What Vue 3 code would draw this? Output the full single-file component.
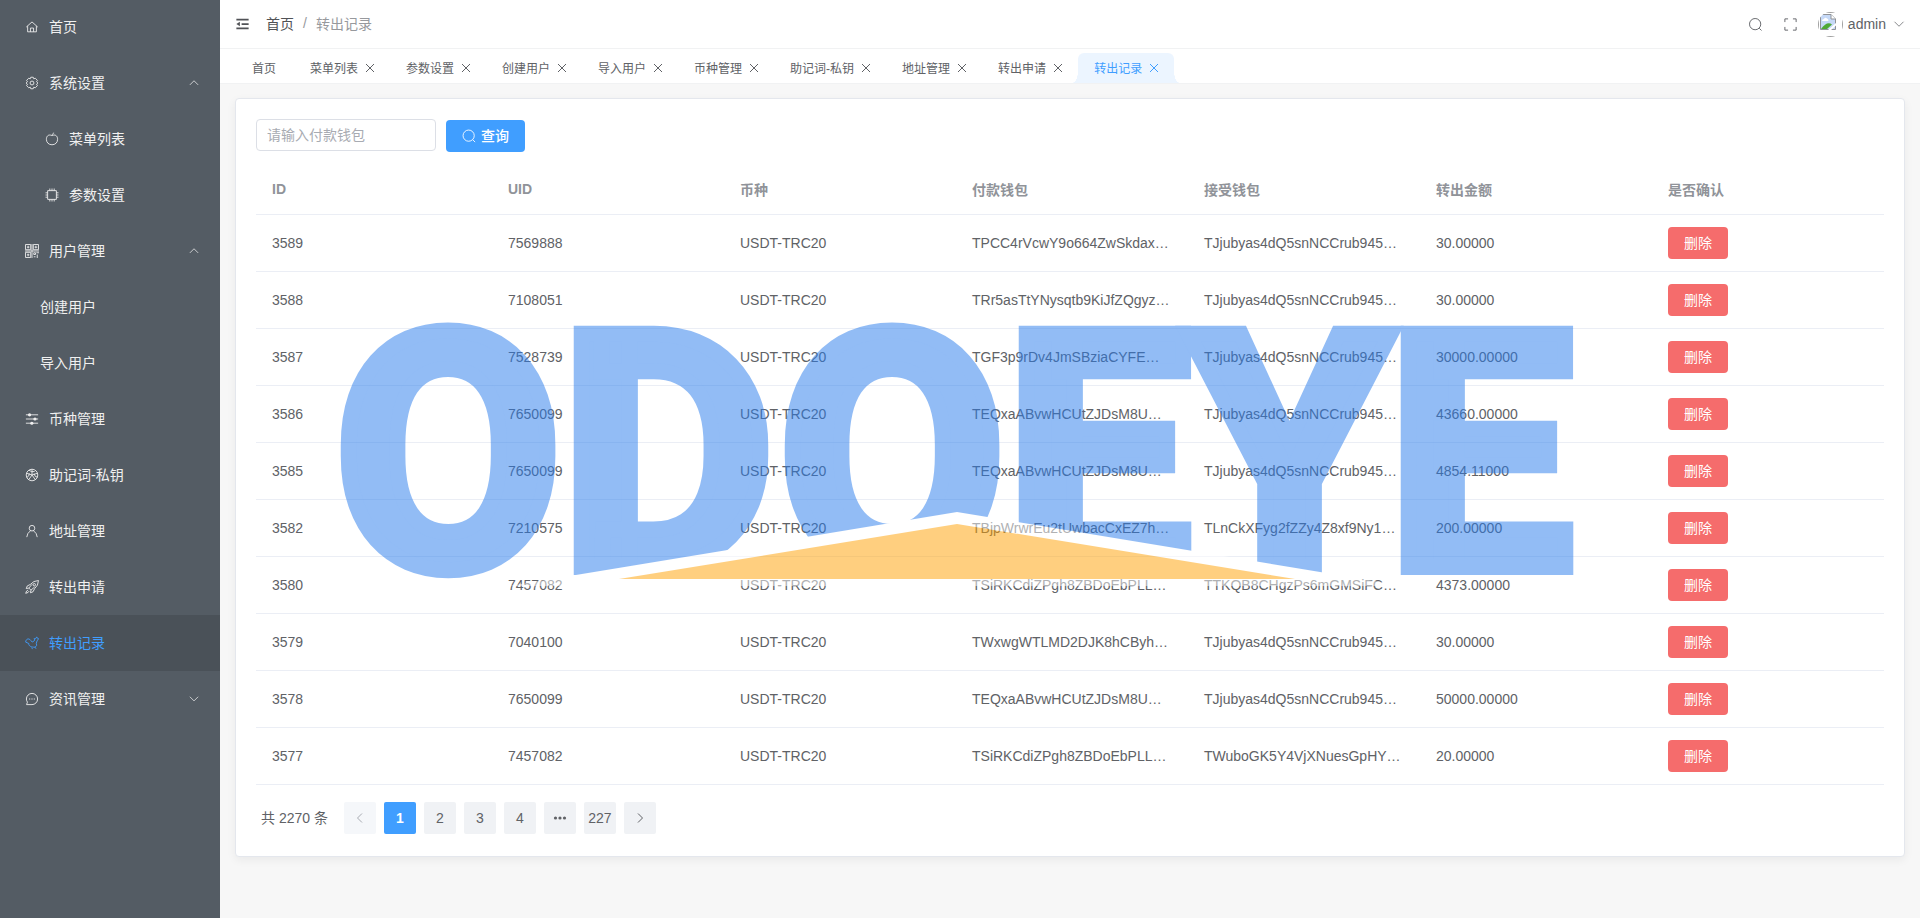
<script setup>
import { ref } from 'vue'

const menu = [
  { label: '首页', icon: 'home', level: 0 },
  { label: '系统设置', icon: 'setting', level: 0, arrow: 'up' },
  { label: '菜单列表', icon: 'apple', level: 1 },
  { label: '参数设置', icon: 'cpu', level: 1 },
  { label: '用户管理', icon: 'grid', level: 0, arrow: 'up' },
  { label: '创建用户', icon: '', level: 1 },
  { label: '导入用户', icon: '', level: 1 },
  { label: '币种管理', icon: 'operation', level: 0 },
  { label: '助记词-私钥', icon: 'ball', level: 0 },
  { label: '地址管理', icon: 'user', level: 0 },
  { label: '转出申请', icon: 'rocket', level: 0 },
  { label: '转出记录', icon: 'plane', level: 0, active: true },
  { label: '资讯管理', icon: 'chat', level: 0, arrow: 'down' },
]

const icons = {
  home: 'M1.5 8 8 2.2 14.5 8M3 7V13.5H13V7M6.2 13.5V9.2H9.8V13.5',
  setting:
    'M6.6 1.4H9.4L10 3.2 11.8 2.6 14.2 5 13.2 6.6 14.8 8 13.2 9.4 14.2 11 11.8 13.4 10 12.8 9.4 14.6H6.6L6 12.8 4.2 13.4 1.8 11 2.8 9.4 1.2 8 2.8 6.6 1.8 5 4.2 2.6 6 3.2ZM10.2 8A2.2 2.2 0 1 1 5.8 8A2.2 2.2 0 1 1 10.2 8Z',
  apple:
    'M9.4 3.6C8.6 4.2 7.4 4.2 6.4 3.6C3.6 2.9 1.6 5 1.6 8.4C1.6 12 4.2 14.6 8 14.6C11.8 14.6 14.4 12 14.4 8.4C14.4 5 12.4 2.9 9.4 3.6M8.2 4C8.2 2.4 9 1.4 10.4 1.2',
  cpu: 'M3 3H13V13H3ZM5.5 3V0.6M8 3V0.6M10.5 3V0.6M5.5 15.4V13M8 15.4V13M10.5 15.4V13M3 5.5H0.6M3 8H0.6M3 10.5H0.6M15.4 5.5H13M15.4 8H13M15.4 10.5H13',
  grid: 'M0.6 0.6H6.5V6.5H0.6ZM9.5 0.6H15.4V6.5H9.5ZM0.6 9.5H6.5V15.4H0.6ZM2.2 3.6H5M11 3.6H14M2.2 12.4H5M8 0V16M0 8H16M10 10H12V12H10ZM13 10H16M10 14.6H12M14 12V16M3.6 2V5M12.4 2V5M3.6 11V14',
  operation: 'M1 3.2H15M1 8H15M1 12.8H15M4 3.2H6.6M10 8H12.6M6.6 12.8H9.2',
  ball: 'M14.6 8A6.6 6.6 0 1 1 1.4 8A6.6 6.6 0 1 1 14.6 8ZM8 8 8 1.4M8 8 14.2 6M8 8 11.8 13.4M8 8 4.2 13.4M8 8 1.8 6M4.6 2.6Q7.5 5 11 4M14.2 10.6Q11 10.4 10.4 6.4M2 10.8Q5 9.8 5 6.2',
  user: 'M11.2 4.8A3.2 3.2 0 1 1 4.8 4.8A3.2 3.2 0 1 1 11.2 4.8ZM2 15Q2.4 10.4 6.4 7.6M14 15Q13.6 10.4 9.6 7.6',
  rocket:
    'M15.4 0.6Q9.5 0.8 6.2 5L2.6 6.8 1.4 9.8 4.4 9.2 6.8 11.6 6.2 14.6 9.2 13.4 11 9.8Q15.2 6.5 15.4 0.6ZM4.4 9.2 8 5M6.8 11.6 11 8M12 5.4A1.4 1.4 0 1 1 9.2 5.4A1.4 1.4 0 1 1 12 5.4ZM3.6 11.4Q1.4 12 0.8 15.2Q4.2 14.6 4.8 12.6',
  plane:
    'M0.8 7C0.8 3.4 4.4 2 6.4 5L8.2 6.8Q10.6 6.2 11.2 4.4L10.2 3.2 12.2 3 13.4 1 14.2 2.6 15.6 3 13.8 5.6Q12.2 8.6 13.4 10.6L11.6 12.8C7.4 13 3.8 11.4 4.4 8.6L0.8 7M7.6 13.2 8.6 15M11.6 12.8 12.6 14.6',
  chat: 'M1.8 14.4H8A6.4 6.4 0 1 0 1.6 8Q1.6 10 2.8 11.6ZM4.6 8H6M7.3 8H8.7M10 8H11.4',
}

const tabs = [
  '首页',
  '菜单列表',
  '参数设置',
  '创建用户',
  '导入用户',
  '币种管理',
  '助记词-私钥',
  '地址管理',
  '转出申请',
  '转出记录',
]
const activeTab = ref('转出记录')

const heads = ['ID', 'UID', '币种', '付款钱包', '接受钱包', '转出金额', '是否确认']
const rows = [
  ['3589', '7569888', 'USDT-TRC20', 'TPCC4rVcwY9o664ZwSkdax…', 'TJjubyas4dQ5snNCCrub945…', '30.00000'],
  ['3588', '7108051', 'USDT-TRC20', 'TRr5asTtYNysqtb9KiJfZQgyz…', 'TJjubyas4dQ5snNCCrub945…', '30.00000'],
  ['3587', '7528739', 'USDT-TRC20', 'TGF3p9rDv4JmSBziaCYFE…', 'TJjubyas4dQ5snNCCrub945…', '30000.00000'],
  ['3586', '7650099', 'USDT-TRC20', 'TEQxaABvwHCUtZJDsM8U…', 'TJjubyas4dQ5snNCCrub945…', '43660.00000'],
  ['3585', '7650099', 'USDT-TRC20', 'TEQxaABvwHCUtZJDsM8U…', 'TJjubyas4dQ5snNCCrub945…', '4854.11000'],
  ['3582', '7210575', 'USDT-TRC20', 'TBjpWrwrEu2tUwbacCxEZ7h…', 'TLnCkXFyg2fZZy4Z8xf9Ny1…', '200.00000'],
  ['3580', '7457082', 'USDT-TRC20', 'TSiRKCdiZPgh8ZBDoEbPLL…', 'TTKQB8CHgzPs6mGMSiFC…', '4373.00000'],
  ['3579', '7040100', 'USDT-TRC20', 'TWxwgWTLMD2DJK8hCByh…', 'TJjubyas4dQ5snNCCrub945…', '30.00000'],
  ['3578', '7650099', 'USDT-TRC20', 'TEQxaABvwHCUtZJDsM8U…', 'TJjubyas4dQ5snNCCrub945…', '50000.00000'],
  ['3577', '7457082', 'USDT-TRC20', 'TSiRKCdiZPgh8ZBDoEbPLL…', 'TWuboGK5Y4VjXNuesGpHY…', '20.00000'],
]
const wallet = ref('')
</script>

<template>
  <div class="layout">
    <nav class="sidebar" aria-label="主菜单">
      <a
        v-for="item in menu"
        :key="item.label"
        href="#"
        class="menu-item"
        :class="{ sub: item.level === 1, 'has-icon': item.icon, active: item.active }"
      >
        <svg v-if="item.icon" class="icon" viewBox="0 0 16 16" aria-hidden="true">
          <path :d="icons[item.icon]" />
          <g v-if="item.icon === 'operation'" class="knobs">
            <circle cx="5.2" cy="3.2" r="1.8" />
            <circle cx="11.4" cy="8" r="1.8" />
            <circle cx="7.8" cy="12.8" r="1.8" />
          </g>
        </svg>
        <span class="menu-label">{{ item.label }}</span>
        <svg v-if="item.arrow" class="icon arrow" viewBox="0 0 16 16" aria-hidden="true">
          <path :d="item.arrow === 'up' ? 'M2.5 10.5 8 5 13.5 10.5' : 'M2.5 5 8 10.5 13.5 5'" />
        </svg>
      </a>
    </nav>

    <div class="main">
      <header class="topbar">
        <button class="plain" aria-label="折叠菜单">
          <svg class="fold" viewBox="0 0 16 16" aria-hidden="true">
            <path class="bars" d="M1 3H15M7 8H15M1 13H15" />
            <path class="tip" d="M1 8 5 5.4V10.6Z" />
          </svg>
        </button>
        <div class="crumbs">
          <a href="#">首页</a><span class="slash">/</span><span>转出记录</span>
        </div>
        <div class="tools">
          <button class="plain" aria-label="搜索">
            <svg class="icon tool" viewBox="0 0 16 16" aria-hidden="true">
              <circle cx="7.6" cy="7.6" r="6" /><path d="M12 12 14.4 14.4" />
            </svg>
          </button>
          <button class="plain" aria-label="全屏">
            <svg class="icon tool" viewBox="0 0 16 16" aria-hidden="true">
              <path d="M2 5.4V2H5.4M10.6 2H14V5.4M14 10.6V14H10.6M5.4 14H2V10.6" />
            </svg>
          </button>
          <button class="plain account">
            <svg class="avatar" viewBox="0 0 25 25" aria-hidden="true">
              <defs>
                <clipPath id="avatar-round"><circle cx="12.5" cy="12.5" r="12.5" /></clipPath>
              </defs>
              <g clip-path="url(#avatar-round)">
                <rect x="0.5" y="0.5" width="24" height="24" fill="#fff" stroke="#a0a0a0" />
                <path d="M2.5 2.5H13L17.5 7V17.5H2.5Z" fill="#c6d9f7" stroke="#8f9296" />
                <path d="M13 2.5V7H17.5" fill="#fff" stroke="#8f9296" />
                <path d="M4 9Q4 7 6 7Q7 5 9 6.4Q10.6 6.6 10.4 9Z" fill="#fff" />
                <path d="M3 17Q9 8.6 14 12.4L9 17Z" fill="#4fa936" />
                <path d="M9.5 18.5 18.5 10.5V13L12.5 18.5Z" fill="#fff" />
              </g>
            </svg>
            <span>admin</span>
            <svg class="icon caret" viewBox="0 0 16 16" aria-hidden="true">
              <path d="M2 5 8 11 14 5" />
            </svg>
          </button>
        </div>
      </header>

      <nav class="tabs" aria-label="已打开页面">
        <a
          v-for="(tab, i) in tabs"
          :key="tab"
          href="#"
          class="tab"
          :class="{ active: tab === activeTab, first: i === 0 }"
          @click.prevent="activeTab = tab"
        >
          <span>{{ tab }}</span>
          <svg v-if="i > 0" class="icon close" viewBox="0 0 12 12" aria-hidden="true">
            <path d="M2 2 10 10M10 2 2 10" />
          </svg>
        </a>
      </nav>

      <main class="content">
        <section class="card">
          <form class="filters" @submit.prevent>
            <input v-model="wallet" type="text" placeholder="请输入付款钱包" aria-label="付款钱包" />
            <button class="query">
              <svg class="icon" viewBox="0 0 16 16" aria-hidden="true">
                <circle cx="7.6" cy="7.6" r="6.4" /><path d="M12.2 12.2 15 15" />
              </svg>
              <span>查询</span>
            </button>
          </form>

          <table>
            <colgroup>
              <col class="col-id" />
              <col v-for="n in 6" :key="n" />
            </colgroup>
            <thead>
              <tr>
                <th v-for="h in heads" :key="h" scope="col">{{ h }}</th>
              </tr>
            </thead>
            <tbody>
              <tr v-for="row in rows" :key="row[0]">
                <td v-for="(cell, i) in row" :key="i">{{ cell }}</td>
                <td><button class="delete">删除</button></td>
              </tr>
            </tbody>
          </table>

          <nav class="pager" aria-label="分页">
            <span class="total">共 2270 条</span>
            <button disabled aria-label="上一页">
              <svg class="icon" viewBox="0 0 12 12" aria-hidden="true"><path d="M8 1.5 3.5 6 8 10.5" /></svg>
            </button>
            <button class="current">1</button>
            <button>2</button>
            <button>3</button>
            <button>4</button>
            <button aria-label="更多页">
              <svg class="dots" viewBox="0 0 14 14" aria-hidden="true">
                <circle cx="2.5" cy="7" r="1.6" /><circle cx="7" cy="7" r="1.6" /><circle cx="11.5" cy="7" r="1.6" />
              </svg>
            </button>
            <button>227</button>
            <button aria-label="下一页">
              <svg class="icon" viewBox="0 0 12 12" aria-hidden="true"><path d="M4 1.5 8.5 6 4 10.5" /></svg>
            </button>
          </nav>
        </section>
      </main>
    </div>

    <div class="watermark">
      <svg viewBox="336 309 1248 300">
        <text class="brand" x="335 561 779 1006 1188 1388" y="567">ODOEYE</text>
        <path d="M509 586 957 512 1405 586Z" fill="#fff" />
        <path d="M619 579 957 524 1295 579Z" fill="#ffa101" />
      </svg>
    </div>
  </div>
</template>

<style>
body {
  margin: 0;
}
</style>

<style scoped>
.layout {
  position: relative;
  display: flex;
  min-height: 100vh;
  overflow: hidden;
  background: #f7f7f7;
  color: #606266;
  font-family: "Liberation Sans", "Noto Sans CJK SC", sans-serif;
  font-size: 14px;
}
* {
  box-sizing: border-box;
}
a {
  color: inherit;
  text-decoration: none;
}
button {
  font: inherit;
  cursor: pointer;
}
.icon {
  flex: none;
  width: 14px;
  height: 14px;
  fill: none;
  stroke: currentColor;
  stroke-width: 1;
}

.sidebar {
  flex: none;
  width: 220px;
  margin-top: -1px;
  background: #545c64;
  color: #fff;
}
.menu-item {
  display: flex;
  align-items: center;
  gap: 10px;
  height: 56px;
  padding: 0 20px 0 25px;
  color: #f0f0f0;
}
.menu-item.sub {
  padding-left: 40px;
}
.menu-item.sub.has-icon {
  padding-left: 45px;
}
.menu-item.active {
  background: #4a5158;
  color: #409eff;
}
.knobs {
  fill: currentColor;
  stroke: none;
}
.menu-label {
  flex: 1;
  padding-bottom: 2px;
}
.menu-item .arrow {
  width: 12px;
  height: 12px;
}

.main {
  display: flex;
  flex: 1;
  flex-direction: column;
  min-width: 0;
}
.topbar {
  display: flex;
  align-items: center;
  height: 49px;
  padding: 0 15px;
  border-bottom: 1px solid #f1f2f3;
  background: #fff;
}
.plain {
  display: flex;
  align-items: center;
  padding: 0;
  border: 0;
  background: none;
  color: #606266;
}
.fold {
  width: 15px;
  height: 14px;
}
.bars {
  fill: none;
  stroke: #505256;
  stroke-width: 2;
}
.tip {
  fill: #505256;
}
.crumbs {
  display: flex;
  align-items: center;
  margin-left: 16px;
  padding-bottom: 2px;
  color: #97999d;
}
.crumbs a {
  color: #505256;
}
.slash {
  margin: 0 9px;
}
.tools {
  display: flex;
  align-items: center;
  gap: 20px;
  margin-left: auto;
}
.tool {
  width: 15px;
  height: 15px;
}
.account {
  gap: 5px;
}
.avatar {
  width: 25px;
  height: 25px;
}
.caret {
  width: 12px;
  height: 12px;
  margin-left: 2px;
}

.tabs {
  display: flex;
  align-items: flex-end;
  height: 35px;
  padding: 0 16px;
  border-bottom: 1px solid #f1f2f3;
  background: #fff;
  font-size: 12px;
}
.tab {
  position: relative;
  display: flex;
  align-items: center;
  height: 30px;
  padding: 0 14px 0 16px;
}
.tab span {
  padding-bottom: 2px;
}
.tab.first {
  margin-right: 4px;
}
.tab.active {
  border-radius: 6px 6px 0 0;
  background: #ecf5ff;
  color: #409eff;
}
.tab.active::before,
.tab.active::after {
  position: absolute;
  bottom: 0;
  width: 6px;
  height: 12px;
  content: "";
}
.tab.active::before {
  right: 100%;
  background: radial-gradient(ellipse 6px 12px at 0 0, transparent 98%, #ecf5ff 100%);
}
.tab.active::after {
  left: 100%;
  background: radial-gradient(ellipse 6px 12px at 100% 0, transparent 98%, #ecf5ff 100%);
}
.close {
  width: 12px;
  height: 12px;
  margin-left: 6px;
}

.content {
  padding: 14px 15px;
}
.card {
  padding: 20px;
  border: 1px solid #e4e7ed;
  border-radius: 4px;
  background: #fff;
  box-shadow: 0 3px 10px rgba(0, 0, 0, 0.06);
}
.filters {
  display: flex;
  align-items: flex-start;
  gap: 10px;
  margin-bottom: 14px;
}
input {
  width: 180px;
  height: 32px;
  padding: 0 10px;
  border: 1px solid #dcdfe6;
  border-radius: 4px;
  color: #606266;
  font: inherit;
}
input::placeholder {
  color: #a8abb2;
}
.query {
  display: flex;
  align-items: center;
  gap: 5px;
  height: 32px;
  margin-top: 1px;
  padding: 0 16px;
  border: 0;
  border-radius: 4px;
  background: #409eff;
  color: #fff;
  font-weight: 500;
}
.query span {
  padding-bottom: 2px;
}

table {
  width: 100%;
  border-collapse: separate;
  border-spacing: 0;
  table-layout: fixed;
}
.col-id {
  width: 236px;
}
th,
td {
  overflow: hidden;
  padding: 0 16px;
  border-bottom: 1px solid #ebeef5;
  text-align: left;
  white-space: nowrap;
}
th {
  height: 49px;
  padding-bottom: 2px;
  color: #909399;
  font-weight: 600;
}
td {
  height: 57px;
}
.delete {
  display: block;
  width: 60px;
  height: 32px;
  padding: 0 0 2px;
  border: 0;
  border-radius: 4px;
  background: #f56c6c;
  color: #fff;
}

.pager {
  display: flex;
  align-items: center;
  gap: 8px;
  padding: 17px 5px 2px;
}
.total {
  margin-right: 8px;
  padding-bottom: 2px;
}
.pager button {
  display: grid;
  place-items: center;
  min-width: 32px;
  height: 32px;
  padding: 0 4px;
  border: 0;
  border-radius: 2px;
  background: #f0f2f5;
  color: #606266;
}
.pager button:disabled {
  background: #f5f7fa;
  color: #a8abb2;
}
.pager button.current {
  background: #409eff;
  color: #fff;
  font-weight: 700;
}
.pager .icon {
  width: 12px;
  height: 12px;
}
.dots {
  width: 14px;
  height: 14px;
  fill: #606266;
}

.watermark {
  position: absolute;
  inset: 0;
  display: grid;
  place-items: center;
  opacity: 0.5;
  pointer-events: none;
}
.watermark svg {
  width: 65%;
}
.brand {
  fill: #277bed;
  stroke: #277bed;
  stroke-width: 16px;
  font-family: "Liberation Sans Narrow", Roboto, sans-serif;
  font-size: 328px;
  font-weight: 700;
}
</style>
